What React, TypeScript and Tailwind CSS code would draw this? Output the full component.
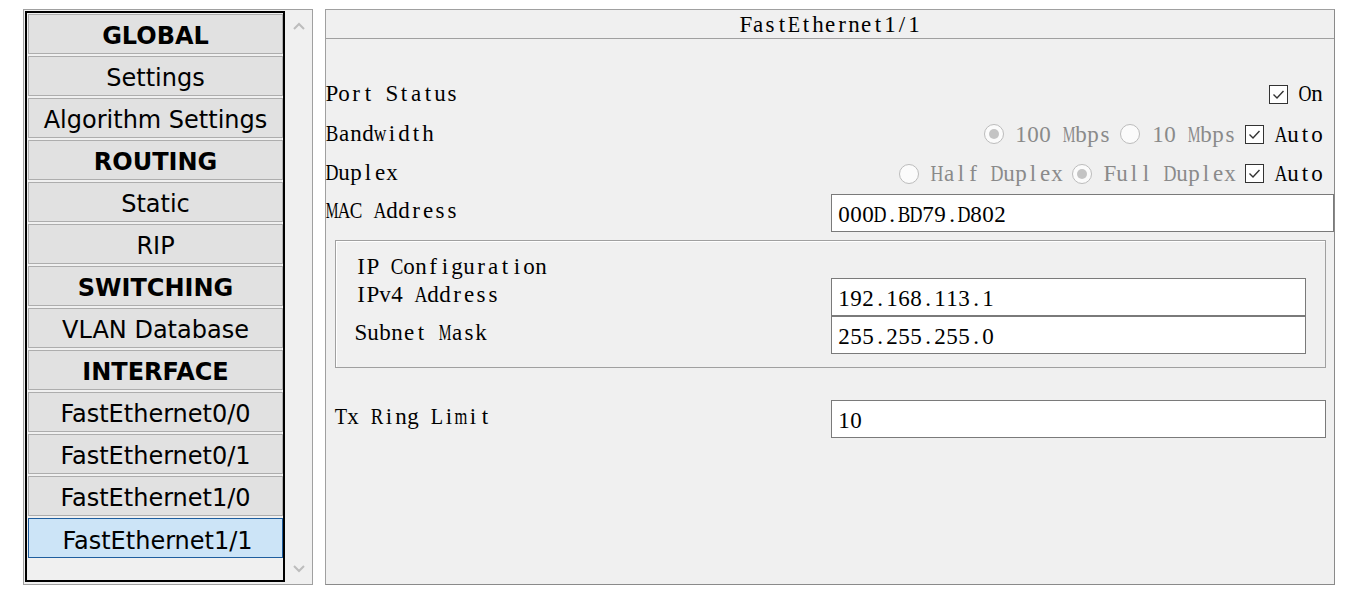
import React from "react";

const items: { t: string; b?: boolean; sel?: boolean }[] = [
  { t: "GLOBAL", b: true },
  { t: "Settings" },
  { t: "Algorithm Settings" },
  { t: "ROUTING", b: true },
  { t: "Static" },
  { t: "RIP" },
  { t: "SWITCHING", b: true },
  { t: "VLAN Database" },
  { t: "INTERFACE", b: true },
  { t: "FastEthernet0/0" },
  { t: "FastEthernet0/1" },
  { t: "FastEthernet1/0" },
  { t: "FastEthernet1/1", sel: true },
];

const squeeze: Record<string, string> = {
  M: "scale-x-[0.62]",
  W: "scale-x-[0.6]",
  m: "scale-x-[0.72]",
  w: "scale-x-[0.76]",
  A: "scale-x-[0.78]",
  D: "scale-x-[0.78]",
  H: "scale-x-[0.78]",
  N: "scale-x-[0.78]",
  U: "scale-x-[0.78]",
  V: "scale-x-[0.78]",
  G: "scale-x-[0.78]",
  O: "scale-x-[0.78]",
  C: "scale-x-[0.82]",
  B: "scale-x-[0.82]",
  R: "scale-x-[0.82]",
  E: "scale-x-[0.88]",
  T: "scale-x-[0.88]",
  L: "scale-x-[0.88]",
};

function T({ s, className = "" }: { s: string; className?: string }) {
  return (
    <span className={`inline-flex shrink-0 font-['Liberation_Serif',serif] text-[23px] leading-none ${className}`}>
      {Array.from(s).map((c, i) => (
        <span key={i} className={`inline-flex w-[12px] justify-center ${squeeze[c] ?? ""}`}>
          {c === " " ? "\u00a0" : c}
        </span>
      ))}
    </span>
  );
}

function Check() {
  return (
    <div className="w-[19px] h-[19px] border border-[#333333] bg-white flex items-center justify-center shrink-0">
      <svg width="13" height="11" viewBox="0 0 13 11">
        <polyline points="1.5,5.5 5,9 11.5,2" fill="none" stroke="#333333" strokeWidth="1.4" />
      </svg>
    </div>
  );
}

function Radio({ on }: { on?: boolean }) {
  return (
    <div className="w-[20px] h-[20px] rounded-full border border-[#bcbcbc] bg-[#fbfbfb] flex items-center justify-center shrink-0">
      {on && <div className="w-[10px] h-[10px] rounded-full bg-[#c4c4c4]" />}
    </div>
  );
}

const inputCls = "h-[38px] border border-[#7a7a7a] bg-white flex items-center pl-[6px] pt-[3px]";

export default function App() {
  return (
    <div className="w-[1356px] h-[603px] bg-white flex items-start pl-[23px] pt-[9px] gap-[12px]">
      {/* Left list panel */}
      <div className="w-[290px] h-[576px] border border-[#a0a0a0] bg-[#f0f0f0] flex pl-[1px] pt-[1px]">
        <div className="w-[260px] h-[571px] border-2 border-black flex flex-col gap-[2px] pl-[1px] pt-[1px] font-['DejaVu_Sans',Verdana,sans-serif] text-[24px] leading-none text-black">
          {items.map((it) => (
            <div
              key={it.t}
              className={
                it.sel
                  ? "w-[255px] h-[40px] shrink-0 border border-[#1f5e9e] bg-[#cce4f7] flex items-center justify-center pt-[6px] pl-[4px]"
                  : "w-[255px] h-[40px] shrink-0 border border-[#adadad] bg-[#e1e1e1] flex items-center justify-center pt-[4px]"
              }
            >
              <span className={it.b ? "font-bold" : ""}>{it.t}</span>
            </div>
          ))}
        </div>
        <div className="flex-1 flex flex-col items-center justify-between pt-[11px] pb-[11px]">
          <svg width="12" height="8" viewBox="0 0 12 8">
            <polyline points="1,7 6,2 11,7" fill="none" stroke="#bdbdbd" strokeWidth="2" />
          </svg>
          <svg width="12" height="8" viewBox="0 0 12 8">
            <polyline points="1,1 6,6 11,1" fill="none" stroke="#bdbdbd" strokeWidth="2" />
          </svg>
        </div>
      </div>

      {/* Right config panel */}
      <div className="w-[1010px] h-[576px] border border-[#a0a0a0] border-r-[#8a8a8a] border-b-[#8a8a8a] bg-[#f0f0f0] flex flex-col text-black">
        <div className="h-[29px] border-b border-[#a0a0a0] flex items-center justify-center">
          <T s="FastEthernet1/1" />
        </div>

        <div className="mt-[36px] flex flex-col">
          {/* Port Status */}
          <div className="h-[39px] flex items-center justify-between pr-[11px]">
            <T s="Port Status" className="mb-[2px]" />
            <div className="flex items-center">
              <Check />
              <T s="On" className="ml-[11px] mb-[2px]" />
            </div>
          </div>
          {/* Bandwidth */}
          <div className="h-[40px] flex items-center justify-between pr-[11px]">
            <T s="Bandwidth" className="mb-[2px]" />
            <div className="flex items-center">
              <Radio on />
              <T s="100 Mbps" className="ml-[11px] text-[#8a8a8a]" />
              <div className="ml-[9px]">
                <Radio />
              </div>
              <T s="10 Mbps" className="ml-[12px] text-[#8a8a8a]" />
              <div className="ml-[9px]">
                <Check />
              </div>
              <T s="Auto" className="ml-[11px]" />
            </div>
          </div>
          {/* Duplex */}
          <div className="h-[39px] flex items-center justify-between pr-[11px]">
            <T s="Duplex" className="mb-[2px]" />
            <div className="flex items-center">
              <Radio />
              <T s="Half Duplex" className="ml-[12px] text-[#8a8a8a]" />
              <div className="ml-[9px]">
                <Radio on />
              </div>
              <T s="Full Duplex" className="ml-[12px] text-[#8a8a8a]" />
              <div className="ml-[9px]">
                <Check />
              </div>
              <T s="Auto" className="ml-[11px]" />
            </div>
          </div>
          {/* MAC */}
          <div className="h-[38px] mt-[1px] flex items-center">
            <div className="w-[505px] shrink-0 flex pb-[6px]">
              <T s="MAC Address" />
            </div>
            <div className={`flex-1 ${inputCls}`}>
              <T s="000D.BD79.D802" />
            </div>
          </div>

          {/* IP Configuration box */}
          <div className="mt-[8px] ml-[9px] mr-[8px] h-[128px] border border-[#a0a0a0] shadow-[inset_1px_1px_0_#ffffff] flex">
            <div className="w-[495px] shrink-0 flex flex-col pl-[19px] pt-[11px]">
              <div className="h-[28px] flex items-center">
                <T s="IP Configuration" />
              </div>
              <div className="h-[28px] flex items-center">
                <T s="IPv4 Address" />
              </div>
              <div className="h-[28px] mt-[10px] flex items-center">
                <T s="Subnet Mask" />
              </div>
            </div>
            <div className="flex flex-col pt-[37px]">
              <div className={`w-[475px] ${inputCls}`}>
                <T s="192.168.113.1" />
              </div>
              <div className={`w-[475px] ${inputCls}`}>
                <T s="255.255.255.0" />
              </div>
            </div>
          </div>

          {/* Tx Ring Limit */}
          <div className="mt-[32px] h-[38px] flex items-center pl-[9px]">
            <div className="w-[496px] shrink-0 flex pb-[5px]">
              <T s="Tx Ring Limit" />
            </div>
            <div className={`w-[495px] ${inputCls}`}>
              <T s="10" />
            </div>
          </div>
        </div>
      </div>
    </div>
  );
}
